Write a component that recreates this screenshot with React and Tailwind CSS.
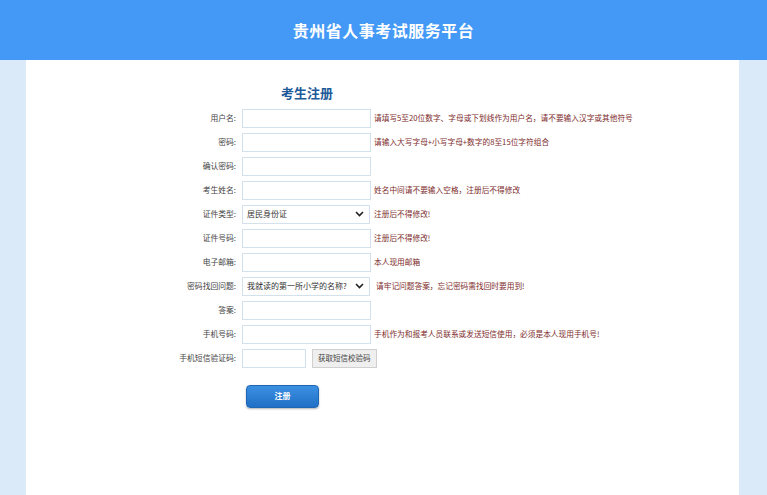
import React from 'react';

const font = { fontFamily: '"Noto Sans CJK SC", "Noto Sans", sans-serif' };

function Chevron() {
  return (
    <svg width="9" height="6" viewBox="0 0 9 6" className="shrink-0">
      <path d="M1 1 L4.5 4.5 L8 1" fill="none" stroke="#222" strokeWidth="1.6" />
    </svg>
  );
}

function Row({ label, children, hint, hintGap = 'ml-[3px]' }) {
  return (
    <div className="flex items-center h-[20px] mb-[4px]">
      <div className="w-[210px] text-right text-[7.8px] text-[#444] leading-none">{label}:</div>
      <div className="ml-[6px] flex items-center">{children}</div>
      {hint && <div className={`${hintGap} text-[7.7px] text-[#7d2b2b] leading-none whitespace-nowrap`}>{hint}</div>}
    </div>
  );
}

function TextBox({ w = 'w-[129px]' }) {
  return <input className={`${w} h-[19px] border border-[#d3e1ec] bg-white outline-none`} />;
}

function SelectBox({ value }) {
  return (
    <div className="w-[128px] h-[19px] border border-[#d3e1ec] bg-white flex items-center justify-between pl-[4px] pr-[5px]">
      <span className="text-[8px] text-[#333] leading-none whitespace-nowrap">{value}</span>
      <Chevron />
    </div>
  );
}

export default function App() {
  return (
    <div className="min-h-screen flex flex-col bg-[#dbeaf9]" style={font}>
      <header className="h-[60px] bg-[#4499f6] flex items-center justify-center">
        <h1 className="text-white text-[16px] font-bold tracking-[0.5px]">贵州省人事考试服务平台</h1>
      </header>

      <main className="flex-1 ml-[26px] mr-[28px] bg-white pt-[26px]">
        <h2 className="pl-[255px] text-[13px] font-bold text-[#1d5a98] leading-none mb-[9px]">考生注册</h2>

        <Row label="用户名" hint="请填写5至20位数字、字母或下划线作为用户名，请不要输入汉字或其他符号">
          <TextBox />
        </Row>
        <Row label="密码" hint="请输入大写字母+小写字母+数字的8至15位字符组合">
          <TextBox />
        </Row>
        <Row label="确认密码">
          <TextBox />
        </Row>
        <Row label="考生姓名" hint="姓名中间请不要输入空格，注册后不得修改">
          <TextBox />
        </Row>
        <Row label="证件类型" hint="注册后不得修改!" hintGap="ml-[4px]">
          <SelectBox value="居民身份证" />
        </Row>
        <Row label="证件号码" hint="注册后不得修改!">
          <TextBox />
        </Row>
        <Row label="电子邮箱" hint="本人现用邮箱">
          <TextBox />
        </Row>
        <Row label="密码找回问题" hint="请牢记问题答案，忘记密码需找回时要用到!" hintGap="ml-[6px]">
          <SelectBox value="我就读的第一所小学的名称?" />
        </Row>
        <Row label="答案">
          <TextBox />
        </Row>
        <Row label="手机号码" hint="手机作为和报考人员联系或发送短信使用，必须是本人现用手机号!">
          <TextBox />
        </Row>
        <Row label="手机短信验证码">
          <TextBox w="w-[64px]" />
          <button className="ml-[6px] h-[19px] px-[5px] border border-[#d0d0d0] bg-[#efefef] text-[7.5px] text-[#444] leading-none">
            获取短信校验码
          </button>
        </Row>

        <div className="pl-[220px] pt-[8px]">
          <button className="w-[73px] h-[23px] rounded-[4px] border border-[#1f66b3] bg-gradient-to-b from-[#3c90e2] to-[#1f70c6] shadow-[0_1px_2px_rgba(0,0,0,0.3)] text-white text-[8px] font-bold">
            注册
          </button>
        </div>
      </main>
    </div>
  );
}
